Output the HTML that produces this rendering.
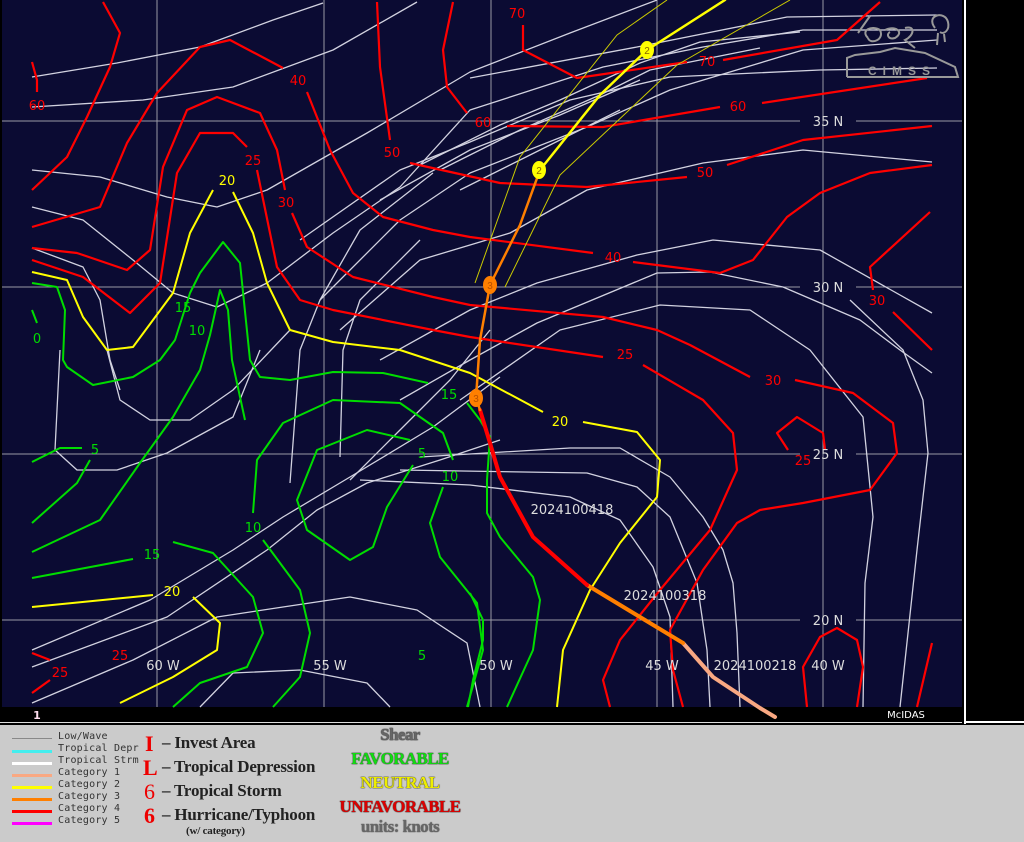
<!DOCTYPE html>
<html><head><meta charset="utf-8"><style>
html,body{margin:0;padding:0;background:#000;}
body{width:1024px;height:842px;position:relative;overflow:hidden;font-family:"Liberation Sans",sans-serif;}
svg{position:absolute;left:0;top:0;}
.leg{position:absolute;left:0;top:725px;width:1024px;height:117px;background:#cbcbcb;}
.ll{position:absolute;left:12px;width:40px;height:3px;}
.lt{position:absolute;left:58px;font-family:"DejaVu Sans Mono","Liberation Mono",monospace;font-size:10px;color:#333;letter-spacing:0.2px;}
.sym{position:absolute;left:140px;font-family:"Liberation Serif",serif;font-weight:bold;color:#e00;font-size:22px;}
.st{position:absolute;left:162px;font-family:"Liberation Serif",serif;font-size:17px;color:#222;font-weight:bold;letter-spacing:-0.2px;}
.sh{position:absolute;left:300px;width:200px;text-align:center;font-family:"Liberation Serif",serif;font-weight:bold;font-size:17px;letter-spacing:-0.6px;}
</style></head><body>
<svg width="1024" height="842" viewBox="0 0 1024 842" xmlns="http://www.w3.org/2000/svg">
<rect x="0" y="0" width="1024" height="724" fill="#000"/>
<rect x="2" y="0" width="960" height="707" fill="#0b0b33"/>
<rect x="964" y="0" width="2" height="724" fill="#fff"/>
<rect x="964" y="721" width="60" height="2" fill="#fff"/>
<rect x="0" y="722" width="962" height="1" fill="#ddd"/>
<g stroke="#9a9aa6" stroke-width="1" fill="none">
<line x1="157" y1="0" x2="157" y2="707"/><line x1="324" y1="0" x2="324" y2="707"/>
<line x1="491" y1="0" x2="491" y2="707"/><line x1="657" y1="0" x2="657" y2="707"/><line x1="823" y1="0" x2="823" y2="707"/>
<line x1="2" y1="121" x2="800" y2="121"/><line x1="856" y1="121" x2="962" y2="121"/>
<line x1="2" y1="287" x2="800" y2="287"/><line x1="856" y1="287" x2="962" y2="287"/>
<line x1="2" y1="454" x2="800" y2="454"/><line x1="856" y1="454" x2="962" y2="454"/>
<line x1="2" y1="620" x2="800" y2="620"/><line x1="856" y1="620" x2="962" y2="620"/>
</g>
<!-- streamlines -->
<g stroke="#d2d2e0" stroke-width="1.3" fill="none" stroke-linejoin="round">
<polyline points="32,77 117,63 200,47 273,20 323,3"/>
<polyline points="32,107 143,100 233,87 333,50 417,2"/>
<polyline points="32,170 100,177 167,197 217,207 267,190 367,133 470,72 570,33 657,0"/>
<polyline points="32,207 83,220 133,260 173,293 217,307 267,283 333,233 400,187 470,110 603,67 703,47 803,30 937,30"/>
<polyline points="470,78 637,47 787,17 937,15"/>
<polyline points="300,240 400,170 470,142 570,100 670,77 820,70 937,68"/>
<polyline points="320,300 400,220 470,173 587,127 670,90 803,50 937,40"/>
<polyline points="340,330 420,260 510,233 587,190 703,163 803,150 932,162"/>
<polyline points="380,360 470,310 537,283 637,255 713,240 820,250 932,313"/>
<polyline points="400,400 470,360 537,323 657,273 710,272 783,287 860,320 900,350 932,373"/>
<polyline points="460,400 560,330 660,305 750,310 810,350 863,417 873,517 865,583 863,707"/>
<polyline points="850,300 903,350 923,400 928,453 917,550 900,707"/>
<polyline points="420,457 570,448 620,448 670,477 703,517 723,550 733,583 737,633 740,707"/>
<polyline points="400,470 587,473 637,487 670,517 697,583 707,650 710,707"/>
<polyline points="360,480 470,485 570,497 620,520 653,567 670,617 673,707"/>
<polyline points="32,650 150,600 233,550 283,517 350,477 433,427 500,377"/>
<polyline points="32,667 167,617 267,550 317,510 367,483 440,460 500,440"/>
<polyline points="32,703 133,660 217,617 283,607 350,597 417,610 467,643 480,707"/>
<polyline points="200,707 233,673 300,670 367,683 390,707"/>
<polyline points="60,350 55,450 77,470 117,470 167,453 233,417 260,350"/>
<polyline points="107,350 120,400 150,420 190,420 233,390 290,330"/>
<polyline points="32,248 83,267 100,300 110,360 120,390"/>
<polyline points="290,483 300,350 320,300 360,230 433,173"/>
<polyline points="340,457 343,350 360,300 420,240"/>
<polyline points="350,480 400,430 450,380 490,330"/>
<polyline points="420,165 500,125 560,100 640,63 700,42 800,32"/>
<polyline points="440,170 520,130 600,95 650,70 760,48"/>
<polyline points="380,200 470,150 560,115 640,80"/>
<polyline points="460,190 540,150 620,110"/>
</g>
<!-- red contours -->
<g stroke="#f00" stroke-width="2.2" fill="none" stroke-linejoin="round">
<polyline points="32,62 37,80 37,92"/>
<polyline points="103,2 120,33 110,67 87,117 67,157 32,190"/>
<polyline points="32,227 100,207 127,143 157,93 200,47 230,40 283,68"/>
<polyline points="307,92 330,150 353,193 383,217 433,230 470,237 593,253"/>
<polyline points="633,262 720,273 753,260 787,217 820,193 870,173 932,165"/>
<polyline points="32,248 77,253 127,270 150,250 163,167 187,110 217,97 260,113 277,150 285,190"/>
<polyline points="292,213 307,247 353,277 433,297 470,305 603,317 657,330 690,345 750,377"/>
<polyline points="795,380 853,393 893,423 897,453 870,490 803,503 760,510 737,523 703,570 670,630 673,670 683,707"/>
<polyline points="32,260 83,277 130,313 160,283 177,173 200,133 233,133 247,147"/>
<polyline points="257,170 277,267 300,300 333,310 433,330 470,337 603,357"/>
<polyline points="643,365 703,400 733,433 737,470 710,530 660,590 620,640 603,680 610,707"/>
<polyline points="453,2 443,50 447,87 467,113"/>
<polyline points="507,126 603,127 720,107"/>
<polyline points="762,103 927,78"/>
<polyline points="377,2 380,67 390,140"/>
<polyline points="410,163 500,183 587,187 687,177"/>
<polyline points="727,165 803,140 932,126"/>
<polyline points="523,25 523,50 577,78 687,62"/>
<polyline points="723,60 837,40 880,2"/>
<polyline points="930,212 870,267 873,290"/>
<polyline points="893,312 932,350"/>
<polyline points="788,450 777,433 797,417 823,433 825,450"/>
<polyline points="807,707 803,667 820,637 837,628 857,640 863,667 857,707"/>
<polyline points="932,643 917,707"/>
<polyline points="32,653 50,660"/>
<polyline points="50,680 32,693"/>
</g>
<!-- yellow -->
<g stroke="#ff0" stroke-width="2" fill="none" stroke-linejoin="round">
<polyline points="213,190 190,233 173,293 133,347 107,350 83,317 67,280 32,272"/>
<polyline points="233,192 253,233 267,283 290,330 333,342 400,350 470,373 543,412"/>
<polyline points="583,422 637,432 660,460 657,497 620,543 590,590 563,650 557,707"/>
<polyline points="32,607 153,595"/>
<polyline points="193,597 220,623 217,650 173,677 120,703"/>
</g>
<!-- green -->
<g stroke="#0d0" stroke-width="2" fill="none" stroke-linejoin="round">
<polyline points="32,283 57,287 65,310 63,360 67,367 93,385 133,377 160,360 175,340 190,293 200,273 223,242 240,263 250,360 260,377 290,380 333,372 383,373 428,383"/>
<polyline points="32,552 100,520 140,463 173,417 200,370 210,335 220,290 228,310 232,360 245,420"/>
<polyline points="32,310 37,323"/>
<polyline points="32,462 60,448 82,448"/>
<polyline points="90,460 77,483 32,523"/>
<polyline points="32,578 133,559"/>
<polyline points="173,542 213,553 253,597 263,633 247,667 200,683 173,707"/>
<polyline points="253,513 257,460 283,423 333,400 400,403 443,433 453,460"/>
<polyline points="443,487 430,523 440,557 477,603 483,650 467,707"/>
<polyline points="263,540 300,590 310,633 300,677 273,707"/>
<polyline points="410,440 367,430 317,450 297,500 307,530 350,560 373,547 387,507 413,465"/>
<polyline points="467,403 480,420 490,437 487,480 487,513 500,537 533,577 540,600 533,650 507,707"/>
<polyline points="470,593 483,620 483,640 473,680 468,707"/>
</g>
<!-- cone -->
<g stroke="#cc0" stroke-width="1" fill="none">
<polyline points="475,283 520,157 617,35 667,0"/>
<polyline points="505,287 560,175 677,65 790,0"/>
</g>
<!-- track -->
<g fill="none" stroke-linejoin="round" stroke-linecap="round">
<polyline points="775,717 760,708 713,677 683,643" stroke="#f9a882" stroke-width="4"/>
<polyline points="683,643 587,585" stroke="#ff7f00" stroke-width="4"/>
<polyline points="587,585 533,537 500,477 490,443 480,410" stroke="#f00" stroke-width="4"/>
<polyline points="480,410 476,398 480,340 490,285 520,225 540,170" stroke="#ff7f00" stroke-width="2.5"/>
<polyline points="540,170 600,95 647,50 725,0" stroke="#ff0" stroke-width="2.5"/>
</g>
<g font-family="Liberation Sans,sans-serif" font-size="10" text-anchor="middle">
<ellipse cx="476" cy="398" rx="7" ry="9" fill="#ff7f00"/><text x="476" y="402" fill="#b85000">3</text>
<ellipse cx="490" cy="285" rx="7" ry="9" fill="#ff7f00"/><text x="490" y="289" fill="#b85000">3</text>
<ellipse cx="539" cy="170" rx="7" ry="9" fill="#ff0"/><text x="539" y="174" fill="#886600">2</text>
<ellipse cx="647" cy="50" rx="7" ry="9" fill="#ff0"/><text x="647" y="54" fill="#886600">2</text>
</g>
<!-- labels -->
<g font-family="DejaVu Sans,sans-serif" font-size="13" text-anchor="middle">
<g fill="#f00">
<text x="37" y="110">60</text><text x="298" y="85">40</text><text x="613" y="262">40</text>
<text x="286" y="207">30</text><text x="773" y="385">30</text><text x="877" y="305">30</text>
<text x="253" y="165">25</text><text x="625" y="359">25</text><text x="803" y="465">25</text>
<text x="483" y="127">60</text><text x="738" y="111">60</text>
<text x="392" y="157">50</text><text x="705" y="177">50</text>
<text x="517" y="18">70</text><text x="707" y="66">70</text>
<text x="120" y="660">25</text><text x="60" y="677">25</text>
</g>
<g fill="#ff0"><text x="227" y="185">20</text><text x="560" y="426">20</text><text x="172" y="596">20</text></g>
<g fill="#0d0"><text x="183" y="312">15</text><text x="197" y="335">10</text><text x="37" y="343">0</text>
<text x="95" y="454">5</text><text x="152" y="559">15</text><text x="253" y="532">10</text>
<text x="450" y="481">10</text><text x="449" y="399">15</text><text x="422" y="458">5</text><text x="422" y="660">5</text></g>
<g fill="#ddd">
<text x="828" y="126">35 N</text><text x="828" y="292">30 N</text><text x="828" y="459">25 N</text><text x="828" y="625">20 N</text>
<text x="163" y="670">60 W</text><text x="330" y="670">55 W</text><text x="496" y="670">50 W</text><text x="662" y="670">45 W</text><text x="828" y="670">40 W</text>
<text x="572" y="514">2024100418</text><text x="665" y="600">2024100318</text><text x="755" y="670">2024100218</text>
</g>
<text x="37" y="719" fill="#fde" font-size="11" font-weight="bold">1</text>
<text x="906" y="718" fill="#fff" font-size="10">McIDAS</text>
</g>
<!-- CIMSS logo -->
<g stroke="#999" stroke-width="2" fill="none">
<polyline points="847,77 847,58 855,55 880,52 895,48 925,53 955,67 958,77 847,77"/>
<path d="M868,38 C860,30 872,25 880,30 C885,40 870,45 868,38 M885,30 C895,25 905,32 895,38 C888,40 886,34 890,32 M905,28 C915,25 915,35 905,40 L915,48"/>
<path d="M935,28 C925,15 945,10 948,22 C950,30 944,35 940,32 M938,33 L937,45 M944,34 L945,42"/>
<line x1="858" y1="33" x2="870" y2="16"/>
</g>
<text x="902" y="75" fill="#999" font-family="Liberation Sans,sans-serif" font-size="12" font-weight="bold" text-anchor="middle" letter-spacing="6">CIMSS</text>
</svg>
<div class="leg">
<div class="ll" style="top:13px;height:1px;background:#888"></div><div class="lt" style="top:6px">Low/Wave</div>
<div class="ll" style="top:25px;background:#4ee"></div><div class="lt" style="top:18px">Tropical Depr</div>
<div class="ll" style="top:37px;background:#fff"></div><div class="lt" style="top:30px">Tropical Strm</div>
<div class="ll" style="top:49px;background:#f9a882"></div><div class="lt" style="top:42px">Category 1</div>
<div class="ll" style="top:61px;background:#ff0"></div><div class="lt" style="top:54px">Category 2</div>
<div class="ll" style="top:73px;background:#ff7f00"></div><div class="lt" style="top:66px">Category 3</div>
<div class="ll" style="top:85px;background:#f00"></div><div class="lt" style="top:78px">Category 4</div>
<div class="ll" style="top:97px;background:#f0f"></div><div class="lt" style="top:90px">Category 5</div>
<div class="sym" style="top:6px;left:145px">I</div><div class="st" style="top:8px">– Invest Area</div>
<div class="sym" style="top:30px;left:143px">L</div><div class="st" style="top:32px">– Tropical Depression</div>
<div class="sym" style="top:54px;left:144px;font-weight:normal">6</div><div class="st" style="top:56px">– Tropical Storm</div>
<div class="sym" style="top:78px;left:144px">6</div><div class="st" style="top:80px">– Hurricane/Typhoon</div>
<div class="st" style="top:100px;left:186px;font-size:11px">(w/ category)</div>
<div class="sh" style="top:0px;color:#666;text-shadow:0 0 1px #222,0 0 1px #222">Shear</div>
<div class="sh" style="top:24px;color:#1d1;text-shadow:0 0 1px #222,0 0 1px #222">FAVORABLE</div>
<div class="sh" style="top:48px;color:#ee0;text-shadow:0 0 1px #222,0 0 1px #222">NEUTRAL</div>
<div class="sh" style="top:72px;color:#d00;text-shadow:0 0 1px #222,0 0 1px #222">UNFAVORABLE</div>
<div class="sh" style="top:92px;color:#666;text-shadow:0 0 1px #222">units: knots</div>
</div>
</body></html>
